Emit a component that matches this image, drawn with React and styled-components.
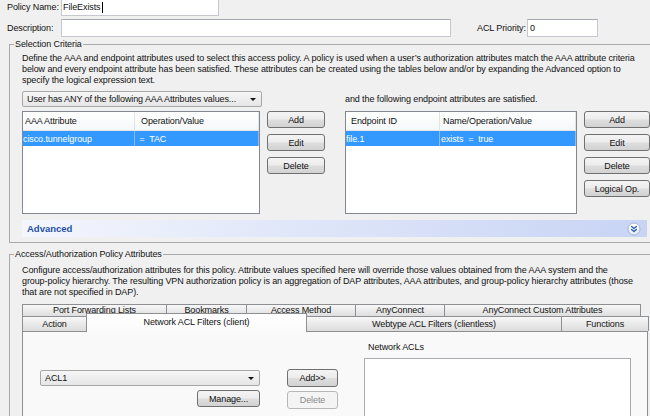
import React from 'react';
import styled, { createGlobalStyle } from 'styled-components';

const Global = createGlobalStyle`
  html, body { margin: 0; padding: 0; background: #f0f0f0; }
  body { font-family: "Liberation Sans", Arial, sans-serif; font-size: 9px; letter-spacing: -0.1px; color: #111; }
  #root { width: 650px; height: 416px; overflow: hidden; }
`;

const Page = styled.div`
  width: 650px;
  height: 416px;
  overflow: hidden;
  background: #f0f0f0;
  display: flex;
  flex-direction: column;
`;

const FieldRow = styled.div`
  display: flex;
  align-items: center;
  height: 18px;
  padding-left: 7px;
  margin-top: ${p => p.$top}px;
  flex: none;
`;

const Label = styled.span`
  width: ${p => p.$w}px;
  margin-left: ${p => p.$ml || 0}px;
  flex: none;
  white-space: nowrap;
`;

const TextBox = styled.div`
  box-sizing: border-box;
  width: ${p => p.$w}px;
  height: ${p => p.$h || 18}px;
  flex: none;
  background: #fff;
  border: 1px solid #c5c9cf;
  border-top-color: #a3a8b0;
  display: flex;
  align-items: center;
  padding-left: ${p => p.$pl || 2}px;
  white-space: nowrap;
`;

const Caret = styled.span`
  display: inline-block;
  width: 1px;
  height: 11px;
  background: #000;
  margin-left: 1px;
`;

const Group = styled.fieldset`
  margin: ${p => p.$mt}px -4px 0 9px;
  padding: 0 6px ${p => p.$pb}px 12px;
  border: 1px solid #aaaaaa;
  min-width: 0;
  flex: none;
`;

const GroupTitle = styled.legend`
  margin-left: -8px;
  padding: 0 1px;
  line-height: 12px;
  height: 12px;
  white-space: nowrap;
`;

const Blurb = styled.div`
  margin-top: ${p => p.$mt}px;
  line-height: 11px;
  white-space: nowrap;
`;

const CriteriaGrid = styled.div`
  display: grid;
  grid-template-columns: 303px 1fr;
  column-gap: 20px;
  margin-top: 5px;
`;

const Side = styled.div`
  display: flex;
  flex-direction: column;
`;

const Combo = styled.div`
  box-sizing: border-box;
  width: ${p => p.$w}px;
  height: 16px;
  border: 1px solid #a7a7a7;
  border-radius: 2px;
  background: linear-gradient(#f6f6f6, #e6e6e6);
  display: flex;
  align-items: center;
  justify-content: space-between;
  padding: 0 5px 0 4px;
  white-space: nowrap;
`;

const Arrow = styled.span`
  width: 0;
  height: 0;
  border-left: 3px solid transparent;
  border-right: 3px solid transparent;
  border-top: 3px solid #111;
  margin-top: 1px;
`;

const SideCaption = styled.div`
  height: 16px;
  display: flex;
  align-items: center;
  white-space: nowrap;
`;

const TableRow = styled.div`
  display: flex;
  gap: 7px;
  margin-top: 4px;
`;

const Table = styled.div`
  box-sizing: border-box;
  width: ${p => p.$w}px;
  height: 103px;
  flex: none;
  background: #fff;
  border: 1px solid #828790;
`;

const HeadRow = styled.div`
  display: grid;
  grid-template-columns: ${p => p.$c1}px 1fr;
  height: 18px;
  border-bottom: 1px solid #e2e3e5;
  background: linear-gradient(#ffffff, #f6f7f8);
`;

const HeadCell = styled.div`
  display: flex;
  align-items: center;
  padding-left: ${p => p.$pl}px;
  border-right: 1px solid #e2e3e5;
  white-space: nowrap;
`;

const DataRow = styled.div`
  display: grid;
  grid-template-columns: ${p => p.$c1}px 1fr;
  height: 15px;
  background: #3399ff;
  color: #fff;
`;

const DataCell = styled.div`
  display: flex;
  align-items: center;
  padding-left: ${p => p.$pl}px;
  border-right: 1px solid #86bdf6;
  white-space: pre;
`;

const ButtonCol = styled.div`
  display: flex;
  flex-direction: column;
  gap: 6px;
  width: ${p => p.$w}px;
  flex: none;
`;

const Button = styled.div`
  box-sizing: border-box;
  width: ${p => (p.$w ? `${p.$w}px` : '100%')};
  height: ${p => p.$h || 17}px;
  flex: none;
  border: 1px solid ${p => (p.$disabled ? '#b5b9bc' : '#707070')};
  border-radius: 3px;
  background: ${p =>
    p.$disabled
      ? '#f4f4f4'
      : 'linear-gradient(#f4f4f4 0%, #ececec 48%, #dedede 52%, #d2d2d2 100%)'};
  color: ${p => (p.$disabled ? '#8a8a8a' : '#111')};
  display: flex;
  align-items: center;
  justify-content: center;
  white-space: nowrap;
  align-self: ${p => p.$align || 'auto'};
`;

const AdvancedBar = styled.div`
  margin-top: 6px;
  height: 17px;
  background: linear-gradient(to right, #f4f6fd 0%, #dfe6f9 45%, #c7d4f4 100%);
  display: flex;
  align-items: center;
  justify-content: space-between;
  padding: 0 6px 0 5px;
`;

const AdvancedTitle = styled.span`
  font-weight: bold;
  font-size: 9.5px;
  letter-spacing: 0;
  color: #1f50a6;
`;

const TabStrip = styled.div`
  width: 626px;
  margin-top: 6px;
  display: flex;
  flex-direction: column;
`;

const TabRow = styled.div`
  display: flex;
  height: ${p => p.$h}px;
  margin-top: ${p => p.$mt || 0}px;
  position: relative;
  z-index: ${p => p.$z};
`;

const Tab = styled.div`
  box-sizing: border-box;
  width: ${p => p.$w}px;
  flex: none;
  margin-left: -1px;
  &:first-child { margin-left: 0; }
  border: 1px solid #8d8f93;
  border-bottom: none;
  background: ${p => (p.$active ? 'linear-gradient(#ffffff, #fafafa)' : 'linear-gradient(#f7f7f7, #dcdcdc)')};
  display: flex;
  align-items: center;
  justify-content: center;
  white-space: nowrap;
  height: ${p => (p.$active ? 'calc(100% + 4px)' : '100%')};
  margin-top: ${p => (p.$active ? '-3px' : '0')};
  position: relative;
  z-index: ${p => (p.$active ? 3 : 1)};
  padding-bottom: ${p => (p.$active ? 3 : p.$lift || 0)}px;
`;

const Panel = styled.div`
  box-sizing: border-box;
  height: 120px;
  border: 1px solid #8d8f93;
  background: #f9f9f9;
  display: flex;
  align-items: flex-start;
  padding-left: 17px;
  position: relative;
  z-index: 1;
`;

const PanelCol = styled.div`
  display: flex;
  flex-direction: column;
  gap: ${p => p.$gap || 0}px;
  width: ${p => p.$w}px;
  margin-top: ${p => p.$mt}px;
  margin-left: ${p => p.$ml || 0}px;
  flex: none;
`;

const ListCaption = styled.div`
  line-height: 11px;
  padding-left: 4px;
  white-space: nowrap;
`;

const ListBox = styled.div`
  box-sizing: border-box;
  width: 267px;
  height: 80px;
  background: #fff;
  border: 1px solid #a9acb2;
`;

function ExpandIcon() {
  return (
    <svg width="14" height="14" viewBox="0 0 14 14">
      <defs>
        <linearGradient id="eg" x1="0" y1="0" x2="0" y2="1">
          <stop offset="0" stopColor="#ffffff" />
          <stop offset="1" stopColor="#e3e9f8" />
        </linearGradient>
      </defs>
      <circle cx="7" cy="7" r="6" fill="url(#eg)" stroke="#a7b7dc" strokeWidth="1" />
      <path d="M4.6 4.4 L7 6.5 L9.4 4.4 M4.6 7.4 L7 9.5 L9.4 7.4" fill="none" stroke="#2f5fb5" strokeWidth="1.3" strokeLinecap="round" strokeLinejoin="round" />
    </svg>
  );
}

const row1Tabs = [
  ['Port Forwarding Lists', 145],
  ['Bookmarks', 81],
  ['Access Method', 110],
  ['AnyConnect', 90],
  ['AnyConnect Custom Attributes', 197],
];

const row2Tabs = [
  ['Action', 65, false],
  ['Network ACL Filters (client)', 221, true],
  ['Webtype ACL Filters (clientless)', 256, false],
  ['Functions', 88, false],
];

export default function App() {
  return (
    <>
      <Global />
      <Page>
        <FieldRow $top={-2}>
          <Label $w={54}>Policy Name:</Label>
          <TextBox $w={158} $pl={1}>FileExists<Caret /></TextBox>
        </FieldRow>
        <FieldRow $top={3}>
          <Label $w={54}>Description:</Label>
          <TextBox $w={390} />
          <Label $w={50} $ml={26}>ACL Priority:</Label>
          <TextBox $w={71} $pl={2}>0</TextBox>
        </FieldRow>

        <Group $mt={1} $pb={5}>
          <GroupTitle>Selection Criteria</GroupTitle>
          <Blurb $mt={3}>
            Define the AAA and endpoint attributes used to select this access policy. A policy is used when a user’s authorization attributes match the AAA attribute criteria
            <br />
            below and every endpoint attribute has been satisfied. These attributes can be created using the tables below and/or by expanding the Advanced option to
            <br />
            specify the logical expression text.
          </Blurb>
          <CriteriaGrid>
            <Side>
              <Combo $w={240}>
                User has ANY of the following AAA Attributes values...
                <Arrow />
              </Combo>
              <TableRow>
                <Table $w={238}>
                  <HeadRow $c1={112}>
                    <HeadCell $pl={2}>AAA Attribute</HeadCell>
                    <HeadCell $pl={6}>Operation/Value</HeadCell>
                  </HeadRow>
                  <DataRow $c1={112}>
                    <DataCell $pl={0}>cisco.tunnelgroup</DataCell>
                    <DataCell $pl={2}>{' =  TAC'}</DataCell>
                  </DataRow>
                </Table>
                <ButtonCol $w={58}>
                  <Button>Add</Button>
                  <Button>Edit</Button>
                  <Button>Delete</Button>
                </ButtonCol>
              </TableRow>
            </Side>
            <Side>
              <SideCaption>and the following endpoint attributes are satisfied.</SideCaption>
              <TableRow>
                <Table $w={232}>
                  <HeadRow $c1={94}>
                    <HeadCell $pl={5}>Endpoint ID</HeadCell>
                    <HeadCell $pl={3}>Name/Operation/Value</HeadCell>
                  </HeadRow>
                  <DataRow $c1={94}>
                    <DataCell $pl={0}>file.1</DataCell>
                    <DataCell $pl={1}>{'exists  =  true'}</DataCell>
                  </DataRow>
                </Table>
                <ButtonCol $w={66}>
                  <Button>Add</Button>
                  <Button>Edit</Button>
                  <Button>Delete</Button>
                  <Button>Logical Op.</Button>
                </ButtonCol>
              </TableRow>
            </Side>
          </CriteriaGrid>
          <AdvancedBar>
            <AdvancedTitle>Advanced</AdvancedTitle>
            <ExpandIcon />
          </AdvancedBar>
        </Group>

        <Group $mt={5} $pb={0}>
          <GroupTitle>Access/Authorization Policy Attributes</GroupTitle>
          <Blurb $mt={5}>
            Configure access/authorization attributes for this policy. Attribute values specified here will override those values obtained from the AAA system and the
            <br />
            group-policy hierarchy. The resulting VPN authorization policy is an aggregation of DAP attributes, AAA attributes, and group-policy hierarchy attributes (those
            <br />
            that are not specified in DAP).
          </Blurb>
          <TabStrip>
            <TabRow $h={13} $z={1}>
              {row1Tabs.map(([t, w]) => (
                <Tab key={t} $w={w} $lift={2}>{t}</Tab>
              ))}
            </TabRow>
            <TabRow $h={15} $mt={-1} $z={2}>
              {row2Tabs.map(([t, w, a]) => (
                <Tab key={t} $w={w} $active={a}>{t}</Tab>
              ))}
            </TabRow>
            <Panel>
              <PanelCol $w={220} $mt={38} $gap={4}>
                <Combo $w={220}>
                  ACL1
                  <Arrow />
                </Combo>
                <Button $w={63} $align="flex-end">Manage...</Button>
              </PanelCol>
              <PanelCol $w={51} $mt={37} $ml={27} $gap={4}>
                <Button $h={18}>Add&gt;&gt;</Button>
                <Button $h={18} $disabled>Delete</Button>
              </PanelCol>
              <PanelCol $w={267} $mt={10} $ml={26} $gap={5}>
                <ListCaption>Network ACLs</ListCaption>
                <ListBox />
              </PanelCol>
            </Panel>
          </TabStrip>
        </Group>
      </Page>
    </>
  );
}
